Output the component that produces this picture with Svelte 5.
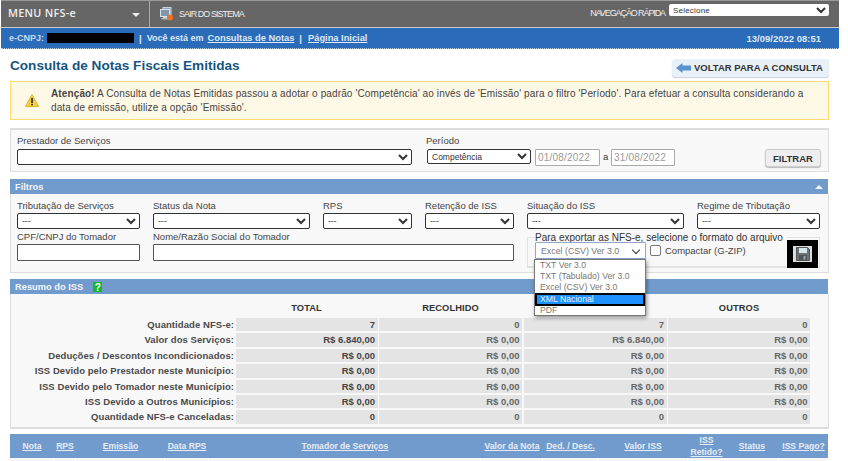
<script lang="ts">
    const filterSelects = [
        "Tributação de Serviços",
        "Status da Nota",
        "RPS",
        "Retenção de ISS",
        "Situação do ISS",
        "Regime de Tributação",
    ];

    const formats = ["TXT Ver 3.0", "TXT (Tabulado) Ver 3.0", "Excel (CSV) Ver 3.0", "XML Nacional", "PDF"];

    const resumo = [
        ["Quantidade NFS-e:", "7", "0", "7", "0"],
        ["Valor dos Serviços:", "R$ 6.840,00", "R$ 0,00", "R$ 6.840,00", "R$ 0,00"],
        ["Deduções / Descontos Incondicionados:", "R$ 0,00", "R$ 0,00", "R$ 0,00", "R$ 0,00"],
        ["ISS Devido pelo Prestador neste Município:", "R$ 0,00", "R$ 0,00", "R$ 0,00", "R$ 0,00"],
        ["ISS Devido pelo Tomador neste Município:", "R$ 0,00", "R$ 0,00", "R$ 0,00", "R$ 0,00"],
        ["ISS Devido a Outros Municípios:", "R$ 0,00", "R$ 0,00", "R$ 0,00", "R$ 0,00"],
        ["Quantidade NFS-e Canceladas:", "0", "0", "0", "0"],
    ];

    const columns = ["Nota", "RPS", "Emissão", "Data RPS", "Tomador de Serviços", "Valor da Nota", "Ded. / Desc.", "Valor ISS", "ISS Retido?", "Status", "ISS Pago?"];
</script>

<div class="page">
    <header class="topbar">
        <div class="menu">
            <span>MENU NFS-e</span>
            <span class="caret"></span>
        </div>
        <a class="logout">
            <svg width="13" height="14" viewBox="0 0 13 14">
                <rect x="3" y="0.5" width="8" height="7" fill="#8fa3b5" stroke="#ccd5dc" />
                <rect x="0.5" y="2.5" width="9" height="7" fill="#7f98ad" stroke="#d8dfe4" />
                <rect x="3" y="10" width="5" height="1" fill="#c9d0d6" />
                <rect x="1.5" y="11" width="8" height="1.5" fill="#b8c0c7" />
                <circle cx="10" cy="10.5" r="3" fill="#e8722a" />
            </svg>
            <span>SAIR DO SISTEMA</span>
        </a>
        <div class="quick">
            <span>NAVEGAÇÃO RÁPIDA</span>
            <select><option>Selecione</option></select>
        </div>
    </header>

    <nav class="crumbs">
        <span class="muted">e-CNPJ:</span>
        <span class="redacted"></span>
        <span class="sep">|</span>
        <span class="here">Você está em</span>
        <a>Consultas de Notas</a>
        <span class="sep">|</span>
        <a>Página Inicial</a>
        <span class="clock">13/09/2022 08:51</span>
    </nav>

    <main class="content">
        <div class="title-row">
            <h1>Consulta de Notas Fiscais Emitidas</h1>
            <button class="back">
                <svg width="15" height="10" viewBox="0 0 15 10"><path d="M0 5 6.5 0v2.6H15v4.8H6.5V10z" fill="#5b93cf" /></svg>
                VOLTAR PARA A CONSULTA
            </button>
        </div>

        <div class="alert">
            <svg width="14" height="13" viewBox="0 0 14 13">
                <path d="M7 .5 13.6 12.5H.4z" fill="#f3cf45" stroke="#e0b62c" stroke-linejoin="round" />
                <rect x="6.2" y="4" width="1.7" height="5" fill="#333" />
                <rect x="6.2" y="9.8" width="1.7" height="1.6" fill="#333" />
            </svg>
            <p><b>Atenção!</b> A Consulta de Notas Emitidas passou a adotar o padrão 'Competência' ao invés de 'Emissão' para o filtro 'Período'. Para efetuar a consulta considerando a data de emissão, utilize a opção 'Emissão'.</p>
        </div>

        <section class="search">
            <div class="field provider">
                <label>Prestador de Serviços</label>
                <select></select>
            </div>
            <div class="field period">
                <label>Período</label>
                <div class="period-row">
                    <select><option>Competência</option></select>
                    <input value="01/08/2022" disabled />
                    <span>a</span>
                    <input value="31/08/2022" disabled />
                </div>
            </div>
            <button class="filter-btn">FILTRAR</button>
        </section>

        <div class="bar filtros-bar">
            <span>Filtros</span>
            <span class="up"></span>
        </div>
        <section class="filtros">
            {#each filterSelects as name}
                <div class="field">
                    <label>{name}</label>
                    <select><option>---</option></select>
                </div>
            {/each}
            <div class="field">
                <label>CPF/CNPJ do Tomador</label>
                <input />
            </div>
            <div class="field wide">
                <label>Nome/Razão Social do Tomador</label>
                <input />
            </div>
            <fieldset class="export">
                <legend>Para exportar as NFS-e, selecione o formato do arquivo</legend>
                <div class="fake-select">Excel (CSV) Ver 3.0</div>
                <span class="check"></span>
                <span class="compact">Compactar (G-ZIP)</span>
                <div class="save">
                    <svg width="14" height="14" viewBox="0 0 14 14">
                        <path d="M.5.5h11l2 2v11H.5z" fill="#6d7479" stroke="#555" />
                        <rect x="3" y="1" width="8" height="5" fill="#d9e6f0" />
                        <rect x="3" y="8" width="8" height="5.5" fill="#4d5458" />
                        <rect x="7.5" y="9" width="2" height="3.5" fill="#9aa2a7" />
                    </svg>
                </div>
                <ul class="dropdown">
                    {#each formats as format}
                        <li class:active={format === "XML Nacional"}>{format}</li>
                    {/each}
                </ul>
            </fieldset>
        </section>

        <div class="bar resumo-bar">
            <span>Resumo do ISS</span>
            <span class="help">?</span>
        </div>
        <section class="resumo">
            <span></span>
            <strong>TOTAL</strong>
            <strong>RECOLHIDO</strong>
            <strong></strong>
            <strong>OUTROS</strong>
            {#each resumo as row}
                <span class="row-label">{row[0]}</span>
                <span class="num total">{row[1]}</span>
                <span class="num">{row[2]}</span>
                <span class="num">{row[3]}</span>
                <span class="num">{row[4]}</span>
            {/each}
        </section>

        <div class="table-head">
            {#each columns as col}
                <a>{col}</a>
            {/each}
        </div>
        <div class="table-row">
            {#each columns as col}
                <span></span>
            {/each}
        </div>
    </main>
</div>

<style>
    :global(body) {
        margin: 0;
        background: #fff;
        overflow: hidden;
    }

    .page {
        width: 848px;
        height: 461px;
        overflow: hidden;
        font-family: "Liberation Sans", Arial, sans-serif;
        font-size: 10px;
        color: #444;
    }

    .topbar {
        display: flex;
        align-items: stretch;
        width: 838px;
        height: 27px;
        margin-left: 1px;
        background: #666;
        border-top: 1px solid #999;
        box-sizing: border-box;
        color: #eee;
    }

    .menu {
        width: 149px;
        display: flex;
        align-items: center;
        justify-content: space-between;
        padding: 0 9px 4px 7px;
        box-sizing: border-box;
        border-right: 1px solid #aaa;
        font-family: "Open Sans", sans-serif;
        font-size: 10.8px;
        font-weight: 600;
        letter-spacing: 0.3px;
    }

    .caret {
        width: 0;
        height: 0;
        border-left: 4px solid transparent;
        border-right: 4px solid transparent;
        border-top: 4px solid #eee;
        margin-top: 5px;
    }

    .logout {
        display: flex;
        align-items: center;
        gap: 6px;
        padding: 0 0 1px 10px;
        font-size: 9px;
        letter-spacing: -0.95px;
    }

    .quick {
        margin-left: auto;
        display: flex;
        align-items: flex-start;
        gap: 4px;
        padding: 3px 10px 0 0;
        font-size: 9px;
        letter-spacing: -1.1px;
    }

    .quick span {
        margin-top: 4px;
    }

    .quick select {
        width: 160px;
        height: 12px;
        padding: 0;
        border: 0;
        background: #fff;
        font: 8px "Liberation Sans", sans-serif;
        color: #333;
        letter-spacing: 0.2px;
    }

    .crumbs {
        display: flex;
        align-items: center;
        gap: 4px;
        width: 838px;
        height: 22px;
        margin-left: 1px;
        margin-top: 0;
        padding: 0 18px 0 8px;
        box-sizing: border-box;
        background: #2a6cba;
        border-top: 1px solid #ccc;
        border-bottom: 1px dotted #b8cde6;
        color: #dfe9f5;
        font-size: 9.5px;
        font-weight: bold;
    }

    .crumbs a {
        font-size: 9.3px;
        text-decoration: underline;
    }

    .crumbs .sep + a {
        margin-left: 1px;
    }

    .muted {
        color: #cbd9ec;
        font-size: 9px;
    }

    .redacted {
        width: 87px;
        height: 10px;
        margin: 0 0 0 -1px;
        background: #000;
    }

    .sep {
        margin: 0 1px;
    }

    .here {
        font-size: 9px;
    }

    .clock {
        margin-left: auto;
    }

    .content {
        width: 819px;
        margin-left: 10px;
    }

    .title-row {
        display: flex;
        align-items: center;
        justify-content: space-between;
        height: 32px;
        padding-top: 0;
    }

    h1 {
        margin: 0;
        font-size: 13.6px;
        font-weight: bold;
        color: #17557f;
    }

    .back {
        display: flex;
        align-items: center;
        gap: 3px;
        width: 157px;
        height: 18px;
        margin-top: 5px;
        padding: 0 0 0 4px;
        border: 0;
        border-radius: 3px;
        background: #e9f1f8;
        box-shadow: 0 1px 1px #ccd;
        font: bold 9.5px "Liberation Sans", sans-serif;
        color: #333;
        white-space: nowrap;
    }

    .back svg {
        flex: none;
    }

    .alert {
        display: flex;
        align-items: center;
        gap: 12px;
        height: 39px;
        box-sizing: border-box;
        padding: 0 14px 0 14px;
        background: #fef8e6;
        border: 1px solid #fbdc6e;
        font-size: 10px;
        letter-spacing: 0.12px;
        line-height: 13.5px;
    }

    .alert p {
        margin: 0;
        flex: 1;
    }

    .search {
        display: flex;
        height: 44px;
        margin-top: 8px;
        box-sizing: border-box;
        padding: 5px 7px 0 6px;
        background: #f8f8f8;
        border: 1px solid #ddd;
        border-width: 2px 1px 1px;
    }

    .field {
        display: flex;
        flex-direction: column;
        font-size: 9.5px;
    }

    label {
        height: 13px;
        line-height: 11px;
    }

    .search label {
        height: 14px;
    }

    select {
        box-sizing: border-box;
        height: 16px;
        border: 1px solid #333;
        border-radius: 2px;
        background: #fff;
        font: 8.5px "Liberation Sans", sans-serif;
        color: #333;
    }

    input {
        box-sizing: border-box;
        height: 17px;
        padding: 0 2px;
        border: 1px solid #555;
        border-radius: 1px;
        background: #fff;
        font: 10px "Liberation Sans", sans-serif;
        letter-spacing: 0.2px;
    }

    .provider {
        width: 395px;
        margin-right: 14px;
    }

    .period-row {
        display: flex;
        align-items: flex-start;
        gap: 3px;
        margin: 0 0 0 1px;
    }

    .period-row select {
        width: 104px;
        height: 15px;
        margin-right: 1px;
    }

    .period-row input {
        width: 65px;
        border-color: #aaa;
        color: #999;
        background: #fff;
    }

    .period-row input:last-child {
        width: 64px;
    }

    .period-row span {
        width: 5px;
        margin: 2px 0 0 0;
        color: #333;
    }

    .filter-btn {
        width: 56px;
        height: 18px;
        margin: 14px 0 0 auto;
        padding: 0;
        border: 1px solid #ccc;
        border-radius: 3px;
        background: #eee;
        box-shadow: 0 1px 1px #bbb;
        font: bold 9.5px "Liberation Sans", sans-serif;
        color: #333;
    }

    .bar {
        display: flex;
        align-items: center;
        box-sizing: border-box;
        width: 818px;
        height: 15px;
        padding: 0 5px;
        background: #729bcd;
        color: #f3f6fa;
        font-weight: bold;
        font-size: 9.3px;
    }

    .filtros-bar {
        margin-top: 7px;
        justify-content: space-between;
    }

    .up {
        width: 0;
        height: 0;
        border-left: 4px solid transparent;
        border-right: 4px solid transparent;
        border-bottom: 4px solid #f3f6fa;
    }

    .filtros {
        display: grid;
        grid-template-columns: 123px 157px 89px 89px 157px 123px;
        grid-template-rows: 31px 36px;
        column-gap: 13px;
        height: 79px;
        box-sizing: border-box;
        padding: 6px 7px 0 6px;
        background: #f8f8f8;
        border: 1px solid #ddd;
        border-top: 0;
    }

    .wide {
        grid-column: span 3;
    }

    .export {
        grid-column: span 2;
        position: relative;
        display: flex;
        align-items: flex-start;
        height: 36px;
        margin: 1px 0 0;
        padding: 0 0 0 7px;
        box-sizing: border-box;
        border: 1px solid #e2e2e2;
        border-width: 1px 1px 2px 1px;
        min-width: 0;
    }

    legend {
        padding: 0 4px 0 0;
        margin-left: 0;
        line-height: 11px;
        color: #333;
    }

    .fake-select {
        position: relative;
        box-sizing: border-box;
        width: 111px;
        height: 17px;
        margin-top: -1px;
        padding: 3px 0 0 5px;
        background: #fff;
        border: 1px solid #8ea6c8;
        border-radius: 1px;
        font-size: 8.8px;
        color: #777;
    }

    .fake-select::after {
        content: "";
        position: absolute;
        right: 6px;
        top: 4px;
        width: 5px;
        height: 5px;
        border-right: 1.5px solid #333;
        border-bottom: 1.5px solid #333;
        transform: rotate(45deg);
    }

    .check {
        width: 11px;
        height: 11px;
        margin: 2px 4px 0 4px;
        border: 1px solid #777;
        border-radius: 2px;
        background: #fff;
        box-sizing: border-box;
    }

    .compact {
        font-size: 9.5px;
        margin-top: 2px;
    }

    .save {
        position: absolute;
        right: 1px;
        top: -3px;
        display: flex;
        align-items: center;
        justify-content: center;
        box-sizing: border-box;
        width: 31px;
        height: 28px;
        background: #ddd;
        border: 6px solid #000;
    }

    .dropdown {
        position: absolute;
        z-index: 2;
        left: 6px;
        top: 16px;
        width: 112px;
        height: 57px;
        margin: 0;
        padding: 0;
        box-sizing: border-box;
        list-style: none;
        background: #fff;
        border: 1px solid #777;
        box-shadow: 1px 2px 4px rgba(0, 0, 0, 0.4);
        font-size: 8.7px;
        color: #777;
    }

    .dropdown li {
        height: 11.2px;
        line-height: 11px;
        padding-left: 5px;
        white-space: nowrap;
    }

    .dropdown li.active {
        position: relative;
        height: 13px;
        margin: -1px 0 -0.4px 0;
        line-height: 9.5px;
        padding-left: 3px;
        box-sizing: border-box;
        background: #1e90ff;
        border: 2px solid #000;
        color: #e8f3ff;
    }

    .resumo-bar {
        margin-top: 6px;
        gap: 10px;
    }

    .help {
        display: flex;
        align-items: center;
        justify-content: center;
        width: 9px;
        height: 10px;
        margin-top: 1px;
        background: #13b82a;
        color: #fff;
        font-size: 10px;
    }

    .resumo {
        display: grid;
        grid-template-columns: 223px 142px 143px 143px 142px;
        grid-template-rows: 17px repeat(7, 13.4px);
        column-gap: 1.5px;
        row-gap: 2px;
        width: 819px;
        height: 135px;
        box-sizing: border-box;
        padding: 5px 0 0;
        background: #f8f8f8;
        border: 1px solid #ddd;
        border-top: 0;
        border-bottom-width: 2px;
    }

    .resumo strong {
        align-self: center;
        text-align: center;
        font-size: 9.3px;
        font-weight: bold;
        letter-spacing: 0.1px;
        color: #333;
    }

    .row-label {
        line-height: 13.4px;
        text-align: right;
        font-weight: bold;
        font-size: 9.5px;
        letter-spacing: 0.07px;
        color: #4a4a4a;
        white-space: nowrap;
    }

    .num {
        padding-right: 2.5px;
        line-height: 13.4px;
        text-align: right;
        background: #e4e4e4;
        font-weight: bold;
        font-size: 9.5px;
        color: #666;
    }

    .total {
        color: #444;
    }

    .table-head,
    .table-row {
        display: grid;
        grid-template-columns: 44px 22px 89px 44px 272px 62px 55px 90px 37px 54px 49px;
        width: 818px;
    }

    .table-head {
        height: 24px;
        margin-top: 5px;
        align-items: center;
        background: #729bcd;
    }

    .table-head a {
        justify-self: center;
        text-align: center;
        font-weight: bold;
        font-size: 8.6px;
        line-height: 12px;
        color: #e6edf6;
        text-decoration: underline;
        white-space: nowrap;
    }

    .table-head a:nth-child(9) {
        white-space: normal;
    }

    .table-row {
        height: 8px;
        background: #fff;
    }

    .table-row span {
        background: #f6f6f6;
        border-right: 1px solid #fff;
    }
</style>
